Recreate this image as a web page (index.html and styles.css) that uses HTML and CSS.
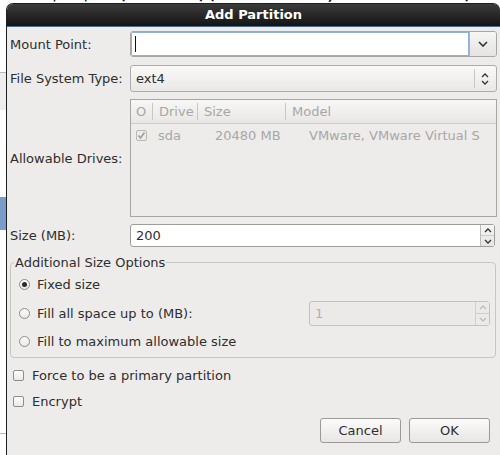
FILE: index.html
```html
<!DOCTYPE html>
<html>
<head>
<meta charset="utf-8">
<link rel="stylesheet" href="styles.css">
</head>
<body>
<div class="backdrop">
  <div class="bg-title">Drive /dev/sda (20480 MB) (Model: VMware, VMware Virtual S)</div>
  <div class="bg-line bg-line-1"></div>
  <div class="bg-band"></div>
  <div class="bg-sel"></div>
  <div class="bg-line bg-line-2"></div>
</div>

<div class="dialog">
  <div class="titlebar">Add Partition</div>
  <div class="content">
    <div class="row row-mount">
      <label class="lbl">Mount Point:</label>
      <div class="combo-entry">
        <div class="entry focused"><span class="caret"></span></div>
        <div class="combo-btn">
          <svg width="10" height="6" viewBox="0 0 10 6"><polyline points="1,1 5,5 9,1" fill="none" stroke="#333" stroke-width="1.6"/></svg>
        </div>
      </div>
    </div>

    <div class="row row-fs">
      <label class="lbl">File System Type:</label>
      <div class="combo-box">
        <span class="combo-text">ext4</span>
        <span class="combo-sep"></span>
        <svg class="updown" width="8" height="12" viewBox="0 0 8 12"><polyline points="1,4 4,1 7,4" fill="none" stroke="#333" stroke-width="1.3"/><polyline points="1,8 4,11 7,8" fill="none" stroke="#333" stroke-width="1.3"/></svg>
      </div>
    </div>

    <div class="row row-drives">
      <label class="lbl">Allowable Drives:</label>
      <div class="drive-table">
        <div class="thead">
          <div class="th th-o">O</div>
          <div class="th th-drive">Drive</div>
          <div class="th th-size">Size</div>
          <div class="th th-model">Model</div>
        </div>
        <div class="trow">
          <div class="td td-o"><span class="chk-dis">
            <svg width="9" height="9" viewBox="0 0 9 9"><polyline points="1.5,4.5 3.5,7 7.5,1.5" fill="none" stroke="#9a9a9a" stroke-width="1.5"/></svg>
          </span></div>
          <div class="td td-drive">sda</div>
          <div class="td td-size">20480 MB</div>
          <div class="td td-model">VMware, VMware Virtual S</div>
        </div>
      </div>
    </div>

    <div class="row row-size">
      <label class="lbl">Size (MB):</label>
      <div class="spin">
        <div class="spin-entry">200</div>
        <div class="spin-btns">
          <div class="spin-b"><svg width="8" height="5" viewBox="0 0 8 5"><polyline points="1,4 4,1 7,4" fill="none" stroke="#333" stroke-width="1.3"/></svg></div>
          <div class="spin-b"><svg width="8" height="5" viewBox="0 0 8 5"><polyline points="1,1 4,4 7,1" fill="none" stroke="#333" stroke-width="1.3"/></svg></div>
        </div>
      </div>
    </div>

    <fieldset class="opts">
      <legend>Additional Size Options</legend>
      <div class="opt opt-first">
        <span class="radio on"></span><span class="opt-text">Fixed size</span>
      </div>
      <div class="opt">
        <span class="radio"></span><span class="opt-text">Fill all space up to (MB):</span>
        <div class="spin spin-dis">
          <div class="spin-entry">1</div>
          <div class="spin-btns">
            <div class="spin-b"><svg width="8" height="5" viewBox="0 0 8 5"><polyline points="1,4 4,1 7,4" fill="none" stroke="#b8b8b8" stroke-width="1.2"/></svg></div>
            <div class="spin-b"><svg width="8" height="5" viewBox="0 0 8 5"><polyline points="1,1 4,4 7,1" fill="none" stroke="#b8b8b8" stroke-width="1.2"/></svg></div>
          </div>
        </div>
      </div>
      <div class="opt">
        <span class="radio"></span><span class="opt-text">Fill to maximum allowable size</span>
      </div>
    </fieldset>

    <div class="check-row check-first"><span class="chk"></span><span>Force to be a primary partition</span></div>
    <div class="check-row"><span class="chk"></span><span>Encrypt</span></div>

    <div class="buttons">
      <button class="btn">Cancel</button>
      <button class="btn">OK</button>
    </div>
  </div>
</div>
</body>
</html>
```

FILE: styles.css
```css
html, body {
  margin: 0;
  padding: 0;
}
body {
  width: 500px;
  height: 455px;
  overflow: hidden;
  position: relative;
  background: #ffffff;
  font-family: "DejaVu Sans", "Liberation Sans", sans-serif;
  font-size: 13px;
  color: #2e2e2e;
}

.backdrop {
  position: absolute;
  inset: 0;
}
.bg-title {
  position: absolute;
  left: 10px;
  top: -12px;
  font-weight: bold;
  color: #111;
  white-space: nowrap;
}
.bg-line {
  position: absolute;
  left: 0;
  width: 8px;
  height: 1px;
  background: #b8b8b8;
}
.bg-line-1 { top: 72px; }
.bg-line-2 { top: 433px; }
.bg-band {
  position: absolute;
  left: 0;
  top: 73px;
  width: 8px;
  height: 37px;
  background: #ededed;
}
.bg-sel {
  position: absolute;
  left: 0;
  top: 197px;
  width: 8px;
  height: 33px;
  background: #7a9cc9;
}

.dialog {
  position: absolute;
  left: 6px;
  top: 3px;
  right: 0;
  bottom: -10px;
  background: #edeceb;
  border: 1px solid #1e1e1e;
  border-right: none;
  border-radius: 7px 7px 0 0;
  display: flex;
  flex-direction: column;
}
.titlebar {
  height: 22px;
  line-height: 22px;
  text-align: center;
  color: #fff;
  font-weight: bold;
  font-size: 13px;
  background: linear-gradient(#3b3b3b, #141414);
  border-radius: 6px 6px 0 0;
  border-bottom: 1px solid #4a6d98;
}

.content {
  padding: 4px 3px 0 3px;
  display: flex;
  flex-direction: column;
}

.row {
  display: grid;
  grid-template-columns: 120px 1fr;
  align-items: center;
}
.lbl {
  white-space: nowrap;
}

/* mount point */
.combo-entry {
  height: 26px;
  display: flex;
  border: 1px solid #a9a7a4;
  border-radius: 3px;
  box-sizing: border-box;
  background: #fff;
}
.entry {
  flex: 1;
  background: #fff;
  border-radius: 2px 0 0 2px;
  position: relative;
}
.entry.focused {
  box-shadow: inset 0 0 0 1px #8eb0d9;
}
.caret {
  position: absolute;
  left: 4px;
  top: 4px;
  width: 1px;
  height: 16px;
  background: #111;
}
.combo-btn {
  width: 26px;
  border-left: 1px solid #b4b2af;
  background: linear-gradient(#f6f6f5, #e4e3e1);
  border-radius: 0 2px 2px 0;
  display: flex;
  align-items: center;
  justify-content: center;
}

/* fs combo */
.row-fs { margin-top: 8px; }
.combo-box {
  height: 27px;
  box-sizing: border-box;
  border: 1px solid #aeaca9;
  border-radius: 3px;
  background: linear-gradient(#f9f9f8, #e9e8e6);
  display: flex;
  align-items: center;
}
.combo-text {
  flex: 1;
  padding-left: 5px;
}
.combo-sep {
  width: 1px;
  height: 19px;
  background: #c9c7c4;
  margin-right: 6px;
}
.updown { margin-right: 7px; }

/* drive table */
.row-drives { margin-top: 7px; }
.drive-table {
  height: 118px;
  box-sizing: border-box;
  border: 1px solid #a7a6a3;
  background: #edeceb;
  color: #a8a7a5;
}
.thead {
  height: 23px;
  display: flex;
  background: linear-gradient(#f7f7f6, #e8e7e5);
  border-bottom: 1px solid #cfcdca;
  align-items: center;
}
.th {
  height: 17px;
  line-height: 17px;
  padding-left: 6px;
  box-sizing: border-box;
  border-left: 1px solid #c9c7c4;
}
.th-o { width: 21px; border-left: none; padding-left: 5px; }
.th-drive { width: 45px; }
.th-size { width: 88px; }
.th-model { flex: 1; }
.trow {
  height: 22px;
  display: flex;
  align-items: center;
}
.td-o { width: 21px; padding-left: 5px; box-sizing: border-box; display: flex; }
.td-drive { width: 63px; padding-left: 6px; box-sizing: border-box; }
.td-size { width: 94px; box-sizing: border-box; }
.td-model { flex: 1; }
.chk-dis {
  width: 11px;
  height: 11px;
  box-sizing: border-box;
  border: 1px solid #b9b8b6;
  border-radius: 2px;
  background: #ecebea;
  display: flex;
  align-items: center;
  justify-content: center;
}

/* size spin */
.row-size { margin-top: 7px; }
.spin {
  height: 23px;
  display: flex;
  box-sizing: border-box;
  border: 1px solid #9f9d9a;
  border-radius: 3px;
  background: #fff;
  margin-right: 2px;
}
.spin-entry {
  flex: 1;
  padding-left: 5px;
  line-height: 21px;
}
.spin-btns {
  width: 13px;
  border-left: 1px solid #bdbbb8;
  display: flex;
  flex-direction: column;
  background: linear-gradient(#f6f6f5, #e6e5e3);
}
.spin-b {
  flex: 1;
  display: flex;
  align-items: center;
  justify-content: center;
}
.spin-b + .spin-b { border-top: 1px solid #d0cecb; }

/* fieldset */
.opts {
  margin: 8px 1px 0 0;
  padding: 0;
  border: 1px solid #c8c6c3;
  border-radius: 4px;
  height: 103px;
  box-sizing: border-box;
  display: block;
}
.opts legend {
  padding: 0 1px;
  margin-left: 3px;
  line-height: 15px;
  color: #2e2e2e;
}
.opt {
  height: 28px;
  display: flex;
  align-items: center;
  padding-left: 8px;
}
.opt-first { height: 29px; }
.opt-text { margin-left: 7px; }
.radio {
  width: 11px;
  height: 11px;
  box-sizing: border-box;
  border: 1px solid #8f8d8a;
  border-radius: 50%;
  background: linear-gradient(#fdfdfd, #e9e8e6);
  position: relative;
}
.radio.on::after {
  content: "";
  position: absolute;
  left: 2px;
  top: 2px;
  width: 5px;
  height: 5px;
  border-radius: 50%;
  background: #2a2a2a;
}
.spin-dis {
  margin-left: auto;
  margin-right: 5px;
  width: 181px;
  height: 25px;
  background: #ebeae9;
  border-color: #c4c2bf;
  color: #b0afad;
}
.spin-dis .spin-entry { line-height: 23px; }
.spin-dis .spin-btns { background: #ebeae9; border-left-color: #d2d0cd; }

/* checks */
.check-row {
  height: 26px;
  display: flex;
  align-items: center;
  padding-left: 3px;
}
.check-first { margin-top: 4px; }
.chk {
  width: 11px;
  height: 11px;
  box-sizing: border-box;
  border: 1px solid #8f8d8a;
  border-radius: 2px;
  background: linear-gradient(#fdfdfd, #ebeae8);
  margin-right: 8px;
}

.buttons {
  display: flex;
  justify-content: flex-end;
  gap: 8px;
  margin-top: 4px;
  padding-right: 7px;
}
.btn {
  width: 81px;
  height: 25px;
  font-family: inherit;
  font-size: 13px;
  color: #2e2e2e;
  border: 1px solid #9c9a97;
  border-radius: 3px;
  background: linear-gradient(#fbfbfb, #e7e6e4);
  padding: 0;
}
```
